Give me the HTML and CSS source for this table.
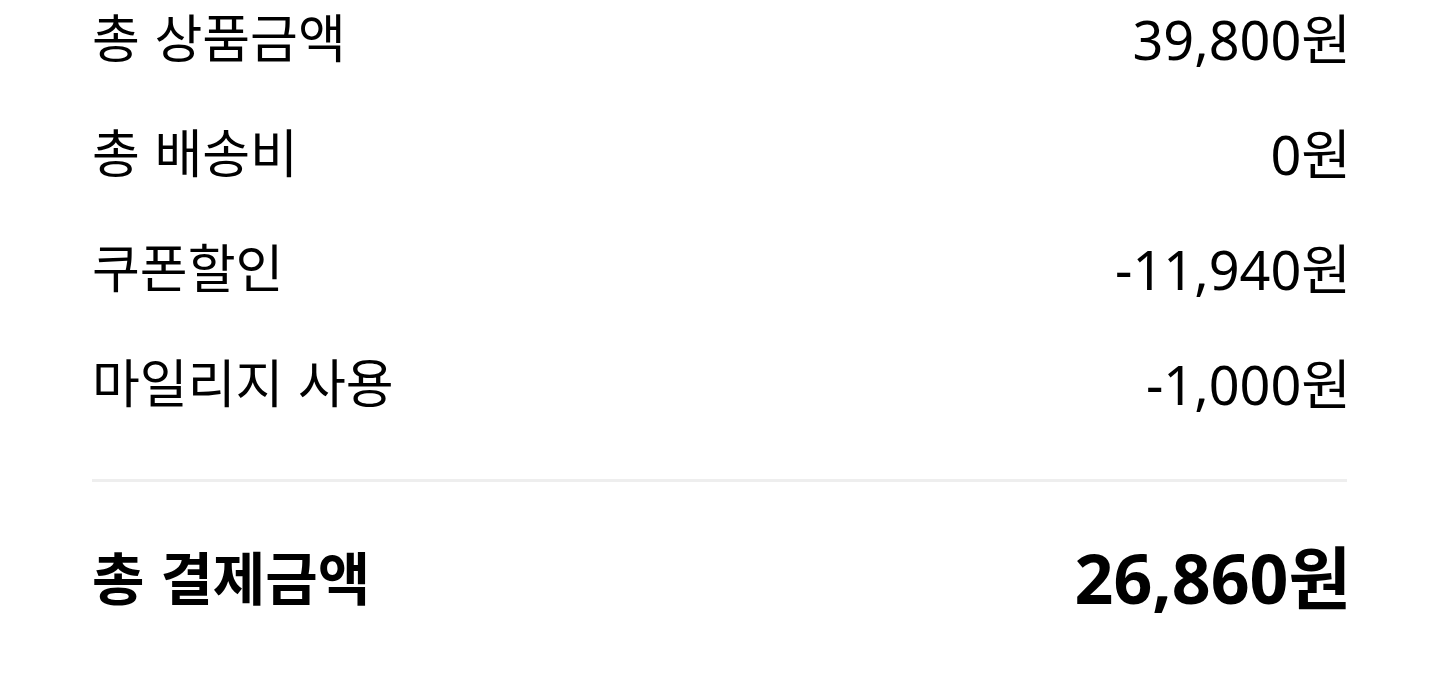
FILE: index.html
```html
<!DOCTYPE html>
<html lang="ko">
<head>
    <meta charset="UTF-8">
    <meta name="viewport" content="width=device-width, initial-scale=1.0">
    <title>결제금액</title>
    <link rel="stylesheet" href="styles.css">
</head>
<body>
    <div class="summary">
        <div class="summary-list">
            <div class="row">
                <span class="label">총 상품금액</span>
                <span class="amount">39,800원</span>
            </div>
            <div class="row">
                <span class="label">총 배송비</span>
                <span class="amount">0원</span>
            </div>
            <div class="row">
                <span class="label">쿠폰할인</span>
                <span class="amount">-11,940원</span>
            </div>
            <div class="row">
                <span class="label">마일리지 사용</span>
                <span class="amount">-1,000원</span>
            </div>
        </div>
        <div class="row total">
            <span class="label">총 결제금액</span>
            <span class="amount">26,860원</span>
        </div>
    </div>
</body>
</html>
```

FILE: styles.css
```css
body {
    margin: 0;
    font-family: "Noto Sans CJK KR", "Noto Sans", sans-serif;
    background: #fff;
    color: #000;
}

.summary {
    padding: 3px 93px 0 92px;
}

.summary-list {
    display: flex;
    flex-direction: column;
    gap: 43px;
    padding-bottom: 59px;
    border-bottom: 3px solid #eeeeee;
}

.row {
    display: flex;
    justify-content: space-between;
    align-items: center;
    height: 72px;
    font-size: 52px;
    line-height: 64px;
}

.label {
    padding-bottom: 6px;
}

.amount {
    font-family: "Noto Sans", "Noto Sans CJK KR", sans-serif;
    font-size: 54px;
    margin-right: -4px;
}

.total {
    margin-top: 48px;
    height: 96px;
    line-height: 80px;
    font-weight: 700;
}

.total .label {
    font-size: 57px;
}

.total .amount {
    font-size: 68px;
}
```
